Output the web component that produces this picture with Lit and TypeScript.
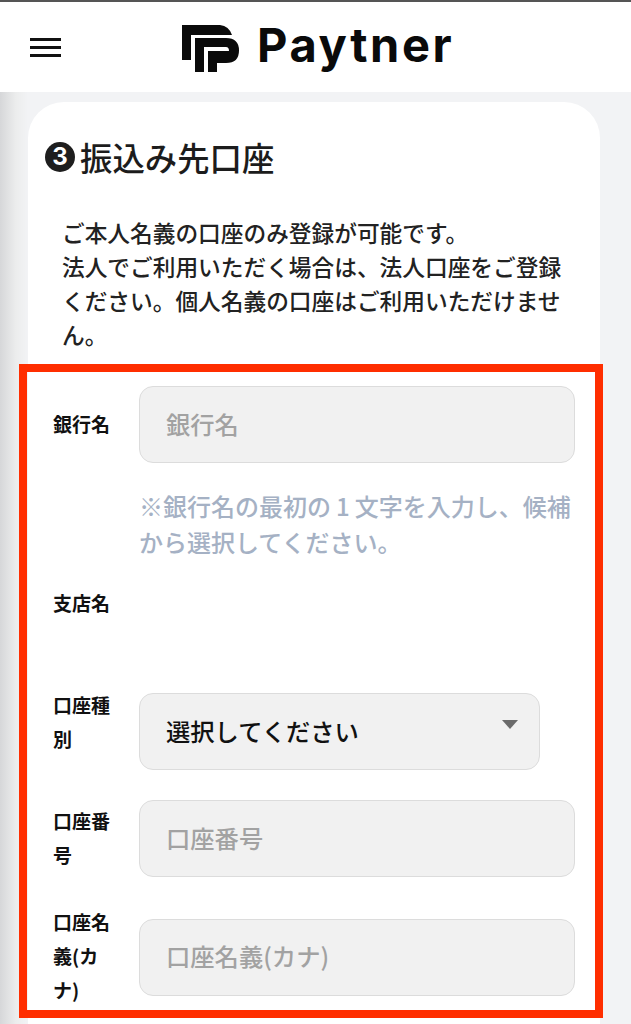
import { LitElement, html, css } from "lit";
import { customElement } from "lit/decorators.js";

@customElement("app-root")
export class AppRoot extends LitElement {
  static styles = css`
    :host { display: block; position: relative; width: 631px; height: 1024px; overflow: hidden; background: #f2f3f5; font-family: "Noto Sans CJK JP", "Noto Sans", sans-serif; color: #1c1c1c; }
    * { box-sizing: border-box; }
    .topbar { height: 2px; background: #555; }
    header { height: 90px; background: #fff; display: flex; align-items: center; padding: 0 0 0 30px; }
    .burger { display: flex; flex-direction: column; gap: 5px; width: 31px; margin-top: 1px; }
    .burger i { display: block; height: 3px; background: #111; }
    .brand { display: flex; align-items: center; margin-left: 121px; gap: 17px; margin-top: 3px; }
    .brand svg { width: 58px; height: 47px; display: block; }
    .word { font-family: Inter, sans-serif; font-weight: 700; font-size: 47px; letter-spacing: 2.6px; line-height: 1; color: #0a0a0a; margin-top: -8px; }
    main { height: 932px; padding: 10px 31px 0 28px; background: linear-gradient(90deg, #d6d7d9 0, #eceded 16px, #f2f3f5 28px); }
    .card { background: #fff; height: 100%; border-radius: 36px 36px 0 0; padding: 33px 25px 0 17px; }
    h2 { margin: 0; font-size: 32.4px; font-weight: 500; line-height: 44px; display: flex; align-items: center; gap: 5px; }
    .num { width: 30px; height: 30px; border-radius: 50%; background: #1e1e1e; color: #fff; font-size: 24px; font-weight: 700; line-height: 30px; text-align: center; font-family: Inter, sans-serif; }
    .lead { margin: 37px 0 0 17px; font-size: 22.7px; line-height: 34px; font-weight: 500; color: #222; }
    .rows { margin: 34px 0 0 8px; }
    .row { display: grid; grid-template-columns: 86px 436px; align-items: center; }
    .lab { font-size: 19px; font-weight: 700; line-height: 34px; color: #111; width: 64px; margin-top: -2px; }
    .field { height: 77px; width: 100%; border: 1.5px solid #dcdcdc; border-radius: 14px; background: #f1f1f1; padding: 0 26px; font: 500 24.3px/1 "Noto Sans CJK JP", sans-serif; color: #111; outline: none; display: flex; align-items: center; }
    input.field { padding-bottom: 3px; }
    .field::placeholder { color: #a2a2a2; opacity: 1; }
    .hint { margin: 25px 0 0 86px; font-size: 24px; font-weight: 500; line-height: 36px; color: #a5b1c4; }
    .one { margin: 0 5px; }
    .branch { height: 34px; margin-top: 27px; }
    .sel { width: 401px; justify-content: space-between; }
    .tri { width: 0; height: 0; border-left: 8.5px solid transparent; border-right: 8.5px solid transparent; border-top: 9px solid #6b6b6b; margin: -14px -5px 0 0; }
    .r-sel { margin-top: 72px; }
    .r-sel .lab { margin-top: -20px; }
    .r-num { margin-top: 30px; }
    .r-name { margin-top: 30px; }
    .overlay { position: absolute; left: 19px; top: 364px; width: 584px; height: 654px; border: 8px solid #ff2e00; pointer-events: none; }
  `;

  render() {
    return html`
      <div class="topbar"></div>
      <header>
        <div class="burger"><i></i><i></i><i></i></div>
        <div class="brand">
          <svg viewBox="0 0 58 47" aria-hidden="true">
            <path fill="#0a0a0a" d="M0 0H38Q47 1 50 10H9V35H0Z" />
            <path fill="#0a0a0a" d="M13 13H44Q57 13 57 25.5Q57 38 44 38H35V47H26V26H47Q47 22 44 22H22V47H13Z" />
          </svg>
          <span class="word">Paytner</span>
        </div>
      </header>
      <main>
        <section class="card">
          <h2><span class="num">3</span>振込み先口座</h2>
          <p class="lead">ご本人名義の口座のみ登録が可能です。<br />法人でご利用いただく場合は、法人口座をご登録ください。個人名義の口座はご利用いただけません。</p>
          <div class="rows">
            <div class="row">
              <div class="lab">銀行名</div>
              <input class="field" placeholder="銀行名" />
            </div>
            <div class="hint">※銀行名の最初の<span class="one">1</span>文字を入力し、候補<br />から選択してください。</div>
            <div class="row branch"><div class="lab">支店名</div><div></div></div>
            <div class="row r-sel">
              <div class="lab">口座種別</div>
              <div class="field sel"><span>選択してください</span><span class="tri"></span></div>
            </div>
            <div class="row r-num">
              <div class="lab">口座番号</div>
              <input class="field" placeholder="口座番号" />
            </div>
            <div class="row r-name">
              <div class="lab">口座名義(カナ)</div>
              <input class="field" placeholder="口座名義(カナ)" />
            </div>
          </div>
        </section>
      </main>
      <div class="overlay"></div>
    `;
  }
}
